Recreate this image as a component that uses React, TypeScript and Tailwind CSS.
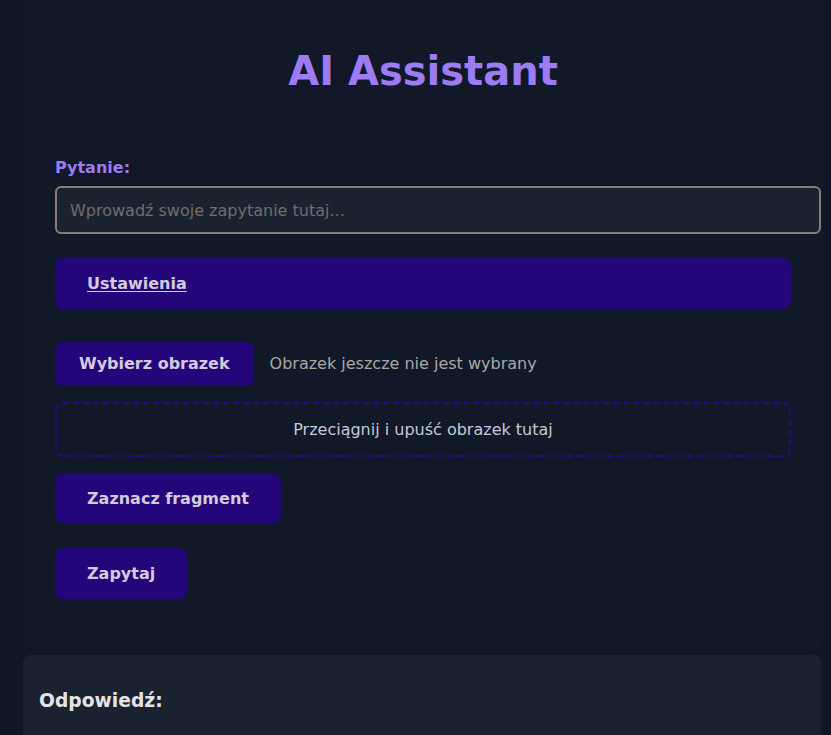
import React from "react";

const btn =
  "flex items-center rounded-lg bg-[#23067a] text-[16px] font-bold text-[#d3cbdd]";

export default function App() {
  return (
    <div className="min-h-screen bg-[#0f1627] pl-[23px] font-['DejaVu_Sans',sans-serif]">
      <div className="w-[800px] rounded-b-lg bg-[#111827] px-8 pt-[47px] pb-[49px]">
        <h1 className="text-center text-[40px] font-bold leading-[48px] text-[#9d7bf3]">
          AI Assistant
        </h1>

        <label className="mt-[61px] block text-[16px] font-bold leading-6 text-[#9d7bf3]">
          Pytanie:
        </label>
        <input
          type="text"
          placeholder="Wprowadź swoje zapytanie tutaj..."
          className="mt-[6px] box-border h-[48px] w-[766px] rounded-md border-2 border-[#877e72] bg-[#1a2230] px-[13px] text-[16px] text-[#ddd] outline-none placeholder:text-[#6e6e6e]"
        />

        <div className={`${btn} mt-6 h-[51px] w-full px-8`}>
          <span className="underline underline-offset-2">Ustawienia</span>
        </div>

        <div className="mt-[33px] flex items-center gap-4">
          <button className={`${btn} h-[44px] justify-center px-6`}>
            Wybierz obrazek
          </button>
          <span className="text-[16px] text-[#aba7a5]">
            Obrazek jeszcze nie jest wybrany
          </span>
        </div>

        <div className="mt-4 flex h-[55px] items-center justify-center rounded-lg border-2 border-dashed border-[#27098a] text-[16px] text-[#c3cad6]">
          Przeciągnij i upuść obrazek tutaj
        </div>

        <button className={`${btn} mt-[17px] h-[49px] px-8`}>
          Zaznacz fragment
        </button>

        <button className={`${btn} mt-[25px] h-[51px] px-8`}>Zapytaj</button>
      </div>

      <div className="mt-[7px] min-h-[120px] w-[798px] rounded-t-lg bg-[#1a2231] px-4 pt-[34px]">
        <h3 className="text-[18.72px] font-bold leading-6 text-[#e4e4e4]">
          Odpowiedź:
        </h3>
      </div>
    </div>
  );
}
